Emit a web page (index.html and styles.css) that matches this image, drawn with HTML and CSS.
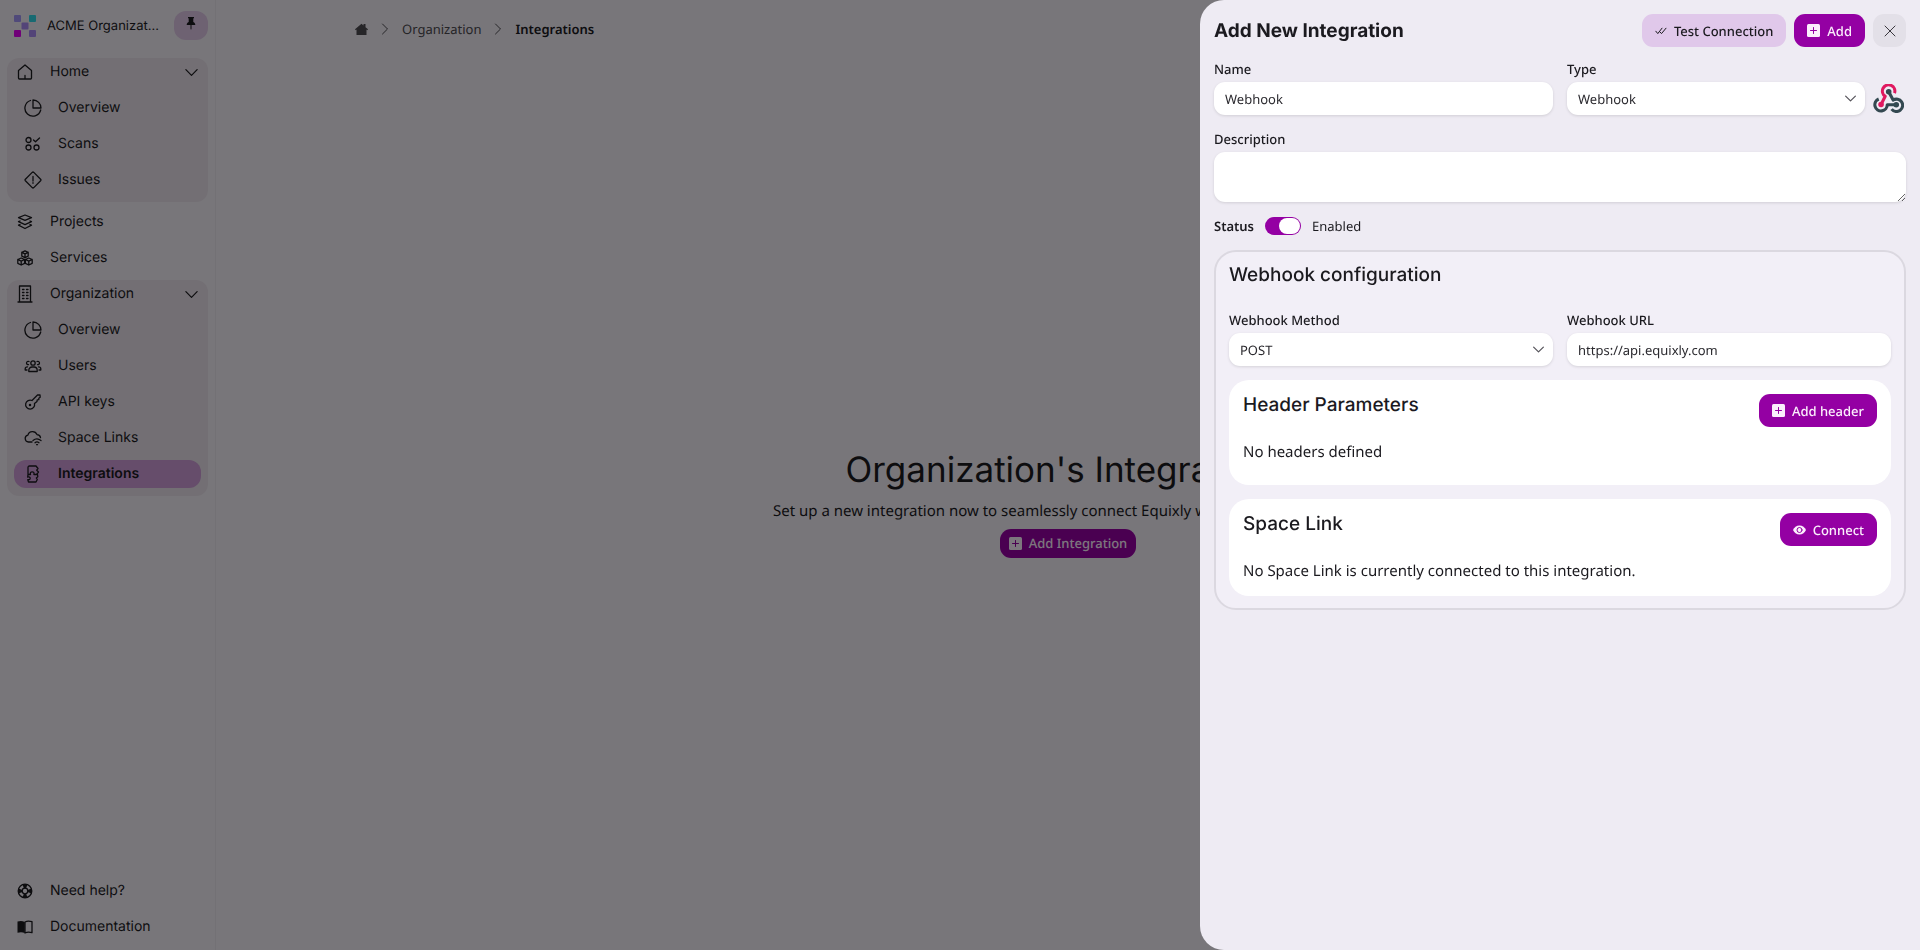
FILE: index.html
```html
<!DOCTYPE html>
<html lang="en">

<head>
    <meta charset="UTF-8" />
    <meta name="viewport" content="width=device-width" />
    <title>Integrations</title>
    <link rel="stylesheet" href="styles.css">
</head>

<body>
    <!-- shared icons -->
    <svg class="sprite" aria-hidden="true">
        <symbol id="i-down" viewBox="0 0 16 16"><path d="M2 5l6 6 6-6" /></symbol>
        <symbol id="i-pie" viewBox="0 0 18 18"><path d="M6.500 1.500A8 8 0 1 0 16.700 11M9 1v8h8a8 8 0 0 0-8-8z" /></symbol>
        <symbol id="i-plus" viewBox="0 0 13 13">
            <rect width="13" height="13" rx="1.500" fill="currentColor" stroke="none" />
            <path class="plus" d="M6.500 3.500v6M3.500 6.500h6" />
        </symbol>
    </svg>

    <div class="layout">
        <aside class="sidebar">
            <header class="org">
                <svg class="logo" viewBox="0 0 22 22" aria-hidden="true">
                    <rect width="7" height="7" rx="1" fill="#a095f5" />
                    <rect x="15" width="7" height="7" rx="1" fill="#30d4e4" />
                    <rect x="7.500" y="7.500" width="7" height="7" rx="1" fill="#a688f0" />
                    <rect y="15" width="7" height="7" rx="1" fill="#e000f0" />
                    <rect x="15" y="15" width="7" height="7" rx="1" fill="#a688f0" />
                </svg>
                <span class="org_name" title="ACME Organization">ACME Organizat...</span>
                <button class="pin" aria-label="Pin menu">
                    <svg width="10" height="13" viewBox="0 0 10 13"><path fill="currentColor" stroke="none" d="M2 0h6v1l-.7.600V5c1.400.700 2 1.600 2 3H5.500v3.500L5 13l-.5-1.500V8H.7c0-1.400.6-2.300 2-3V1.600L2 1z" /></svg>
                </button>
            </header>

            <nav class="menu">
                <div class="group">
                    <a class="item" href="#">
                        <svg width="16" height="16" viewBox="0 0 16 16"><path d="M1.500 6.500L8 1l6.500 5.500V14a1 1 0 0 1-1 1h-11a1 1 0 0 1-1-1zM8 11.500V15" /></svg>
                        <span>Home</span>
                        <svg class="arrow" width="15" height="15"><use href="#i-down" /></svg>
                    </a>
                    <a class="item sub" href="#"><svg width="18" height="18"><use href="#i-pie" /></svg><span>Overview</span></a>
                    <a class="item sub" href="#">
                        <svg width="18" height="18" viewBox="0 0 18 18"><circle cx="4.500" cy="5" r="2.500" /><circle cx="4.500" cy="12.500" r="2.500" /><circle cx="12.500" cy="12.500" r="2.500" /><path d="M9.500 5l2 1.800L15.500 3" /></svg>
                        <span>Scans</span>
                    </a>
                    <a class="item sub" href="#">
                        <svg width="18" height="18" viewBox="0 0 18 18"><path d="M8.200 1.400a1.200 1.200 0 0 1 1.600 0l6.800 6.800a1.200 1.200 0 0 1 0 1.600l-6.800 6.800a1.200 1.200 0 0 1-1.600 0L1.400 9.800a1.200 1.200 0 0 1 0-1.600zM9 5.500V10M9 11.700v.6" /></svg>
                        <span>Issues</span>
                    </a>
                </div>
                <div class="links">
                    <a class="item" href="#">
                        <svg width="16" height="16" viewBox="0 0 16 16"><path d="M8 1l6.500 2.700L8 6.400 1.500 3.700zM3 7L1.500 7.700 8 10.600l6.500-2.900L13 7M3 10.500l-1.500.7L8 14.500l6.500-3.300-1.500-.7" /></svg>
                        <span>Projects</span>
                    </a>
                    <a class="item" href="#">
                        <svg width="16" height="16" viewBox="0 0 16 16"><path d="M8 .8l3.200 1.500v3.800L8 7.600 4.800 6.100V2.300zM4.800 2.300L8 3.800l3.200-1.500M8 3.800v3.800M4.200 8l3.400 1.500v3.800l-3.400 1.700L.8 13.300V9.500zM.8 9.500l3.400 1.600 3.400-1.600M4.200 11.100V15M11.800 8l3.400 1.500v3.800L11.800 15l-3.400-1.700V9.500zM8.400 9.500l3.400 1.600 3.400-1.600M11.800 11.100V15" /></svg>
                        <span>Services</span>
                    </a>
                </div>
                <div class="group">
                    <a class="item" href="#">
                        <svg width="16" height="18" viewBox="0 0 16 18"><path d="M2.500 16.500V1h11v15.500M1 17h14M5.500 4.500h1.500M9.500 4.500H11M5.500 7.500h1.500M9.500 7.500H11M5.500 10.500h1.500M9.500 10.500H11M5.500 13.500h1.500M9.500 13.500H11" /></svg>
                        <span>Organization</span>
                        <svg class="arrow" width="15" height="15"><use href="#i-down" /></svg>
                    </a>
                    <a class="item sub" href="#"><svg width="18" height="18"><use href="#i-pie" /></svg><span>Overview</span></a>
                    <a class="item sub" href="#">
                        <svg width="18" height="18" viewBox="0 0 18 18"><circle cx="9" cy="6" r="2.200" /><path d="M4.800 14.500v-1.300A3.200 3.200 0 0 1 8 10h2a3.200 3.200 0 0 1 3.200 3.200v1.300zM5 4.500a1.700 1.700 0 1 0-.5 3.200M13 4.500a1.700 1.700 0 1 1 .5 3.200M3 13H1.200v-1.200c0-1.200.9-2 2.300-2M15 13h1.800v-1.200c0-1.200-.9-2-2.300-2" /></svg>
                        <span>Users</span>
                    </a>
                    <a class="item sub" href="#">
                        <svg width="18" height="18" viewBox="0 0 18 18"><path d="M8 7.500L13.500 2 16 1.800l.2 2.400-1.400 1v1.500l-1.600.2-.2 1.500-2.500 2.200a4.500 4.500 0 1 1-2.500-3.100z" /><circle cx="6" cy="12" r=".6" /></svg>
                        <span>API keys</span>
                    </a>
                    <a class="item sub" href="#">
                        <svg width="18" height="18" viewBox="0 0 18 18"><path d="M8 13H4.500a3.500 3.500 0 0 1-.6-6.900A4.800 4.800 0 0 1 13 5.600c2 .1 3.300 1.400 3.500 3M9 11.500c2.300-2 5.500-2 8 0M11 13.700c1.300-1 2.700-1 4 0M12.600 15.700h.9" /></svg>
                        <span>Space Links</span>
                    </a>
                    <a class="item sub active" href="#" aria-current="page">
                        <svg width="18" height="18" viewBox="0 0 18 18"><path d="M4 9.500V2.500C4 1.500 4.500 1 5.500 1H12l2 2.500-1.300 1.700L14.500 7l-2 2.500M4 9.500h2.500C5.800 7.500 7 6.800 8.200 6.800s2.300.7 1.700 2.700h3.600l.3 2.300-1.500 1.200 1 1.500L12 17H4.500l-.7-2.300c1.600.3 2.400-.4 2.400-1.400s-.9-1.700-2.500-1.300z" /></svg>
                        <span>Integrations</span>
                    </a>
                </div>
            </nav>

            <div class="links bottom">
                <a class="item" href="#">
                    <svg width="16" height="16" viewBox="0 0 16 16"><circle cx="8" cy="8" r="6.800" /><circle cx="8" cy="8" r="2.800" /><circle class="ring" cx="8" cy="8" r="4.900" pathLength="8" /></svg>
                    <span>Need help?</span>
                </a>
                <a class="item" href="#">
                    <svg width="16" height="16" viewBox="0 0 16 16"><path fill="currentColor" stroke="none" d="M.5 2.500C3 1.700 5.500 1.700 7.800 3v11c-2.300-1-4.600-1-7.300-.3z" /><path d="M8 3c2-1.200 4.500-1.200 7-.3v11c-2.500-.7-5-.7-7 .3z" /></svg>
                    <span>Documentation</span>
                </a>
            </div>
        </aside>

        <main class="content">
            <nav class="breadcrumb" aria-label="Breadcrumb">
                <a href="#" aria-label="Home">
                    <svg width="13" height="13" viewBox="0 0 13 13"><path fill="currentColor" stroke="none" d="M6.500.800l2 1.700V1h2v3.200L13 6.300l-.7.900-.8-.6V12H1.500V6.600l-.8.600L0 6.300z" /></svg>
                </a>
                <svg width="8" height="12" viewBox="0 0 8 12"><path d="M1.500 1L6.500 6l-5 5" /></svg>
                <a href="#">Organization</a>
                <svg width="8" height="12" viewBox="0 0 8 12"><path d="M1.500 1L6.500 6l-5 5" /></svg>
                <strong>Integrations</strong>
            </nav>
            <section class="empty">
                <h1>Organization's Integrations</h1>
                <p>Set up a new integration now to seamlessly connect Equixly with your existing tools.</p>
                <button class="btn small"><svg width="13" height="13"><use href="#i-plus" /></svg>Add Integration</button>
            </section>
        </main>
    </div>

    <div class="overlay"></div>

    <!-- side panel -->
    <div class="drawer" role="dialog" aria-labelledby="drawerTitle">
        <header class="drawer_head">
            <h2 id="drawerTitle">Add New Integration</h2>
            <button class="btn light">
                <svg width="12" height="8" viewBox="0 0 12 8"><path d="M.8 4.200L2.800 6.600 7 1.200M5 5l1.500 1.600L11 1.200" /></svg>Test Connection
            </button>
            <button class="btn"><svg width="13" height="13"><use href="#i-plus" /></svg>Add</button>
            <button class="btn close" aria-label="Close">
                <svg width="12" height="12" viewBox="0 0 12 12"><path d="M1 1l10 10M11 1L1 11" /></svg>
            </button>
        </header>

        <form class="form">
            <div class="row">
                <div class="field">
                    <label for="name">Name</label>
                    <input type="text" id="name" value="Webhook">
                </div>
                <div class="field">
                    <label for="type">Type</label>
                    <div class="type">
                        <div class="select">
                            <select id="type"><option>Webhook</option></select>
                            <svg width="13" height="13"><use href="#i-down" /></svg>
                        </div>
                        <svg class="hook" viewBox="0 0 30 28" aria-hidden="true">
                            <g class="pink"><path d="M20.800 8.800A6 6 0 1 0 11.800 11.800L8 19.500" /><circle cx="7.800" cy="19.800" r="2.700" /></g>
                            <g class="slate"><path d="M15.200 7.500L19.500 15.500A6 6 0 1 1 18 24.300" /><circle cx="15.200" cy="7.500" r="2.700" /></g>
                            <g class="slate"><path d="M22.500 20H13.800A6 6 0 1 1 5.500 14.500" /><circle cx="22.500" cy="20" r="2.700" /></g>
                        </svg>
                    </div>
                </div>
            </div>

            <div class="field">
                <label for="description">Description</label>
                <textarea id="description"></textarea>
            </div>

            <div class="status">
                <label for="status">Status</label>
                <input type="checkbox" class="toggle" id="status" checked>
                <span>Enabled</span>
            </div>

            <section class="config">
                <h3>Webhook configuration</h3>
                <div class="row">
                    <div class="field">
                        <label for="method">Webhook Method</label>
                        <div class="select">
                            <select id="method"><option>POST</option></select>
                            <svg width="13" height="13"><use href="#i-down" /></svg>
                        </div>
                    </div>
                    <div class="field">
                        <label for="url">Webhook URL</label>
                        <input type="text" id="url" value="https://api.equixly.com">
                    </div>
                </div>

                <div class="card tall">
                    <div class="card_head">
                        <h3>Header Parameters</h3>
                        <button type="button" class="btn"><svg width="13" height="13"><use href="#i-plus" /></svg>Add header</button>
                    </div>
                    <p>No headers defined</p>
                </div>

                <div class="card">
                    <div class="card_head">
                        <h3>Space Link</h3>
                        <button type="button" class="btn">
                            <svg width="13" height="10" viewBox="0 0 13 10"><path fill="currentColor" stroke="none" d="M6.500.5C9.500.5 11.900 2.500 13 5c-1.100 2.500-3.500 4.500-6.500 4.500S1.100 7.500 0 5C1.100 2.500 3.500.5 6.500.5z" /><circle class="eye" cx="6.500" cy="5" r="2.500" /></svg>Connect
                        </button>
                    </div>
                    <p>No Space Link is currently connected to this integration.</p>
                </div>
            </section>
        </form>
    </div>
</body>

</html>
```

FILE: styles.css
```css
:root {
    --purple: #9400a3;
    --panel: #eeebf3;
    --text: #1b1a1f;
    --title: Inter, "Liberation Sans", sans-serif;
}

* {
    box-sizing: border-box;
}

body {
    margin: 0;
    background: #f1edf5;
    color: var(--text);
    font: 13px/20px "Noto Sans", sans-serif;
    text-rendering: geometricPrecision;
}

h1,
h2,
h3,
p {
    margin: 0;
}

a {
    color: inherit;
    text-decoration: none;
}

svg {
    flex: none;
    fill: none;
    stroke: currentColor;
    stroke-linecap: round;
    stroke-linejoin: round;
}

.sprite {
    display: none;
}

/* === layout === */

.layout {
    display: flex;
    min-height: 100vh;
}

.sidebar {
    display: flex;
    flex-direction: column;
    width: 216px;
    padding: 11px 7px 5px;
    border-right: 1px solid #e6e2eb;
    font-family: var(--title);
    font-size: 14px;
}

.org {
    display: flex;
    align-items: center;
    padding-left: 7px;
    margin-bottom: 18px;
}

.logo {
    width: 22px;
    height: 22px;
    margin-right: 11px;
    stroke: none;
}

.org_name {
    flex: 1;
    font-size: 13px;
    white-space: nowrap;
}

.pin {
    display: grid;
    place-items: center;
    width: 34px;
    height: 29px;
    padding: 0 0 4px;
    border: 0;
    border-radius: 12px;
    background: #dcc4e4;
    color: var(--text);
}

/* === menu === */

.menu {
    flex: 1;
}

.group {
    padding-bottom: 8px;
    border-radius: 12px;
    background: #e6dfe8;
}

.links {
    padding-top: 6px;
}

.item {
    display: flex;
    align-items: center;
    gap: 17px;
    height: 28px;
    padding: 0 9px 0 10px;
    margin-bottom: 8px;
    stroke-width: 1.3;
}

.group .item:last-child {
    margin-bottom: 0;
}

.item span {
    flex: 1;
}

.item.sub {
    gap: 16px;
    margin-left: 7px;
    margin-right: 7px;
    border-radius: 12px;
}

.item.active {
    background: #cc9bd6;
    font-weight: 600;
}

.ring {
    stroke-width: 4;
    stroke-dasharray: 1 1;
    stroke-dashoffset: 0.5;
    stroke-linecap: butt;
}

.bottom .item:last-child {
    margin-bottom: 4px;
}

/* === page === */

.content {
    flex: 1;
    display: flex;
    flex-direction: column;
}

.breadcrumb {
    display: flex;
    align-items: center;
    gap: 13px;
    padding: 19px 139px 18px;
    color: #4c4a50;
}

.breadcrumb a {
    display: flex;
}

.breadcrumb strong {
    color: var(--text);
    font-weight: 600;
}

.empty {
    flex: 1;
    display: flex;
    flex-direction: column;
    align-items: center;
    justify-content: center;
    padding-bottom: 4px;
    text-align: center;
}

.empty h1 {
    font: 400 35px/48px var(--title);
}

.empty p {
    margin: 7px 0 8px;
    font-size: 15px;
}

/* === buttons === */

.btn {
    display: flex;
    align-items: center;
    gap: 7px;
    height: 33px;
    padding: 0 13px;
    border: 0;
    border-radius: 11px;
    background: var(--purple);
    color: #fbeefc;
    font: 500 13px/20px "Noto Sans", sans-serif;
    text-rendering: inherit;
    cursor: pointer;
}

.btn.small {
    height: 29px;
    padding: 0 9px;
}

.btn.light {
    background: #e0c8ea;
    color: var(--text);
}

.btn.close {
    justify-content: center;
    width: 33px;
    padding: 0;
    background: #e3e0e8;
    color: #3a383e;
}

.plus,
.eye {
    stroke: var(--purple);
}

/* === drawer === */

.overlay {
    position: fixed;
    inset: 0;
    background: rgba(0, 0, 0, 0.5);
}

.drawer {
    position: fixed;
    top: 0;
    right: 0;
    bottom: 0;
    width: 37.5%;
    padding: 14px;
    overflow: auto;
    border-radius: 24px 0 0 24px;
    background: var(--panel);
}

.drawer_head {
    display: flex;
    align-items: center;
    gap: 8px;
    margin-bottom: 12px;
}

.drawer_head h2 {
    flex: 1;
    font: 700 19px/32px var(--title);
}

.row {
    display: grid;
    grid-template-columns: 1fr 1fr;
    gap: 14px;
}

.form {
    display: flex;
    flex-direction: column;
    gap: 14px;
}

.field {
    display: flex;
    flex-direction: column;
    gap: 3px;
}

label {
    font-weight: 500;
}

input[type="text"],
select,
textarea {
    width: 100%;
    height: 33px;
    padding: 0 11px;
    border: 0;
    border-radius: 11px;
    background: #fff;
    box-shadow: 0 1px 3px rgba(0, 0, 0, 0.12);
    color: #2a292e;
    font: 13px/20px "Noto Sans", sans-serif;
    text-rendering: inherit;
}

textarea {
    display: block;
    height: 50px;
    padding: 7px 11px;
}

.select {
    flex: 1;
    display: grid;
    align-items: center;
}

.select select {
    grid-area: 1 / 1;
    appearance: none;
}

.select svg {
    grid-area: 1 / 1;
    justify-self: end;
    margin-right: 8px;
    color: #55535a;
    stroke-width: 1.5;
    pointer-events: none;
}

.type {
    display: flex;
    align-items: center;
    gap: 8px;
    padding-right: 2px;
}

.hook {
    width: 31px;
    height: 29px;
    stroke-width: 3;
    stroke-linecap: butt;
}

.hook circle {
    stroke: none;
}

.pink {
    stroke: #e0195f;
}

.pink circle {
    fill: #e0195f;
}

.slate {
    stroke: #334850;
}

.slate circle {
    fill: #334850;
}

.status {
    display: flex;
    align-items: center;
    gap: 11px;
}

.status label {
    font-weight: 600;
}

.toggle {
    appearance: none;
    display: flex;
    justify-content: flex-end;
    width: 36px;
    height: 18px;
    margin: 0;
    padding: 1px;
    border-radius: 9px;
    background: var(--purple);
}

.toggle::before {
    content: "";
    width: 21px;
    border-radius: 8px;
    background: #fff;
}

/* === configuration === */

.config {
    display: flex;
    flex-direction: column;
    gap: 14px;
    padding: 9px 13px 12px;
    border: 2px solid #dbd8e0;
    border-radius: 22px;
    background: #f2eff7;
}

h3 {
    font: 500 19px/28px var(--title);
}

.config > h3 {
    margin-bottom: 7px;
}

.card {
    padding: 14px;
    border-radius: 20px;
    background: #fff;
}

.card.tall {
    padding-bottom: 22px;
}

.card_head {
    display: flex;
    align-items: flex-start;
    justify-content: space-between;
    margin-bottom: 14px;
}

.card_head h3 {
    line-height: 22px;
}

.card p {
    font-size: 15px;
    line-height: 22px;
}
```
